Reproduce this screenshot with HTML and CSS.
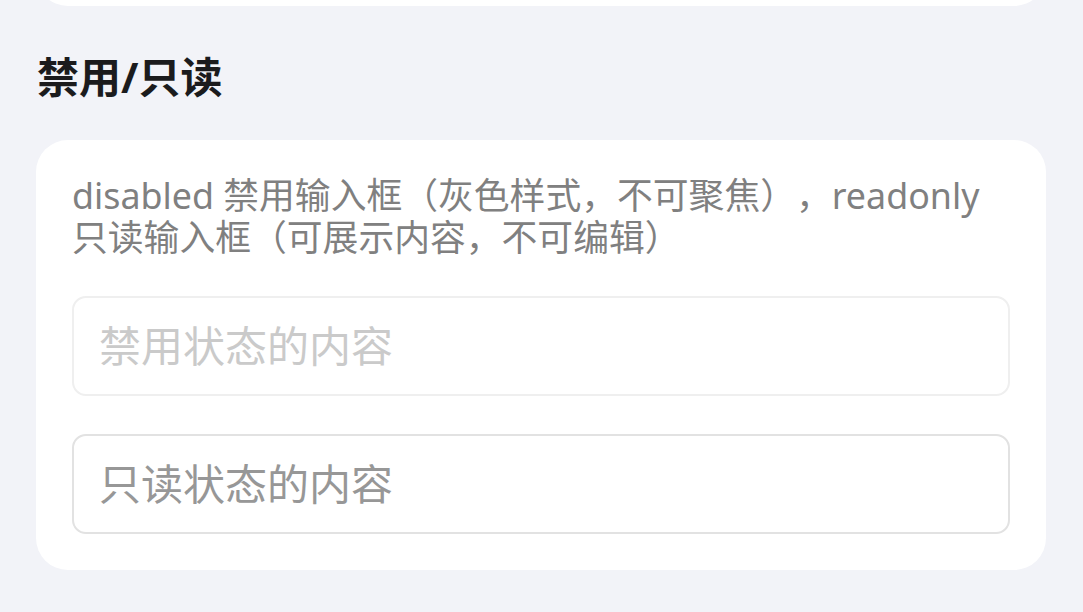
FILE: index.html
```html
<!DOCTYPE html>
<html lang="zh-CN">
<head>
<meta charset="utf-8">
<title>禁用/只读</title>
<link rel="stylesheet" href="styles.css">
</head>
<body>
<div class="page">
  <div class="card card-prev"></div>
  <h2 class="section-title">禁用/只读</h2>
  <div class="card">
    <p class="desc">disabled 禁用输入框（灰色样式，不可聚焦），readonly 只读输入框（可展示内容，不可编辑）</p>
    <div class="fields">
      <input class="field field-disabled" type="text" value="禁用状态的内容" disabled>
      <input class="field field-readonly" type="text" value="只读状态的内容" readonly>
    </div>
  </div>
</div>
</body>
</html>
```

FILE: styles.css
```css
html, body {
  margin: 0;
  padding: 0;
  background: #f2f3f8;
}
body {
  font-family: "Noto Sans", "Noto Sans CJK SC", sans-serif;
  overflow: hidden;
  height: 612px;
}
.page {
  padding: 0 37px 0 36px;
  display: flex;
  flex-direction: column;
}
.card {
  background: #ffffff;
  border-radius: 32px;
  padding: 34px 36px 36px 36px;
  box-sizing: border-box;
}
.card-prev {
  height: 100px;
  margin-top: -94px;
  padding: 0;
}
.section-title {
  margin: 43px 0 35px 1px;
  font-size: 42px;
  line-height: 56px;
  font-weight: 700;
  color: #1b1b1d;
}
.desc {
  margin: 0;
  font-size: 35.8px;
  line-height: 42px;
  color: #808080;
  padding-right: 18px;
  text-spacing-trim: space-all;
}
.fields {
  margin-top: 38px;
  display: flex;
  flex-direction: column;
  gap: 38px;
}
.field {
  display: block;
  width: 100%;
  height: 100px;
  box-sizing: border-box;
  border-radius: 14px;
  background: #ffffff;
  padding: 0 0 5px 25px;
  font-family: "Noto Sans", "Noto Sans CJK SC", sans-serif;
  font-size: 42px;
  outline: none;
  margin: 0;
}
.field-disabled {
  border: 2px solid #efefef;
  color: #cacaca;
  -webkit-text-fill-color: #cacaca;
}
.field-readonly {
  border: 2px solid #e2e2e2;
  color: #979797;
}
```
